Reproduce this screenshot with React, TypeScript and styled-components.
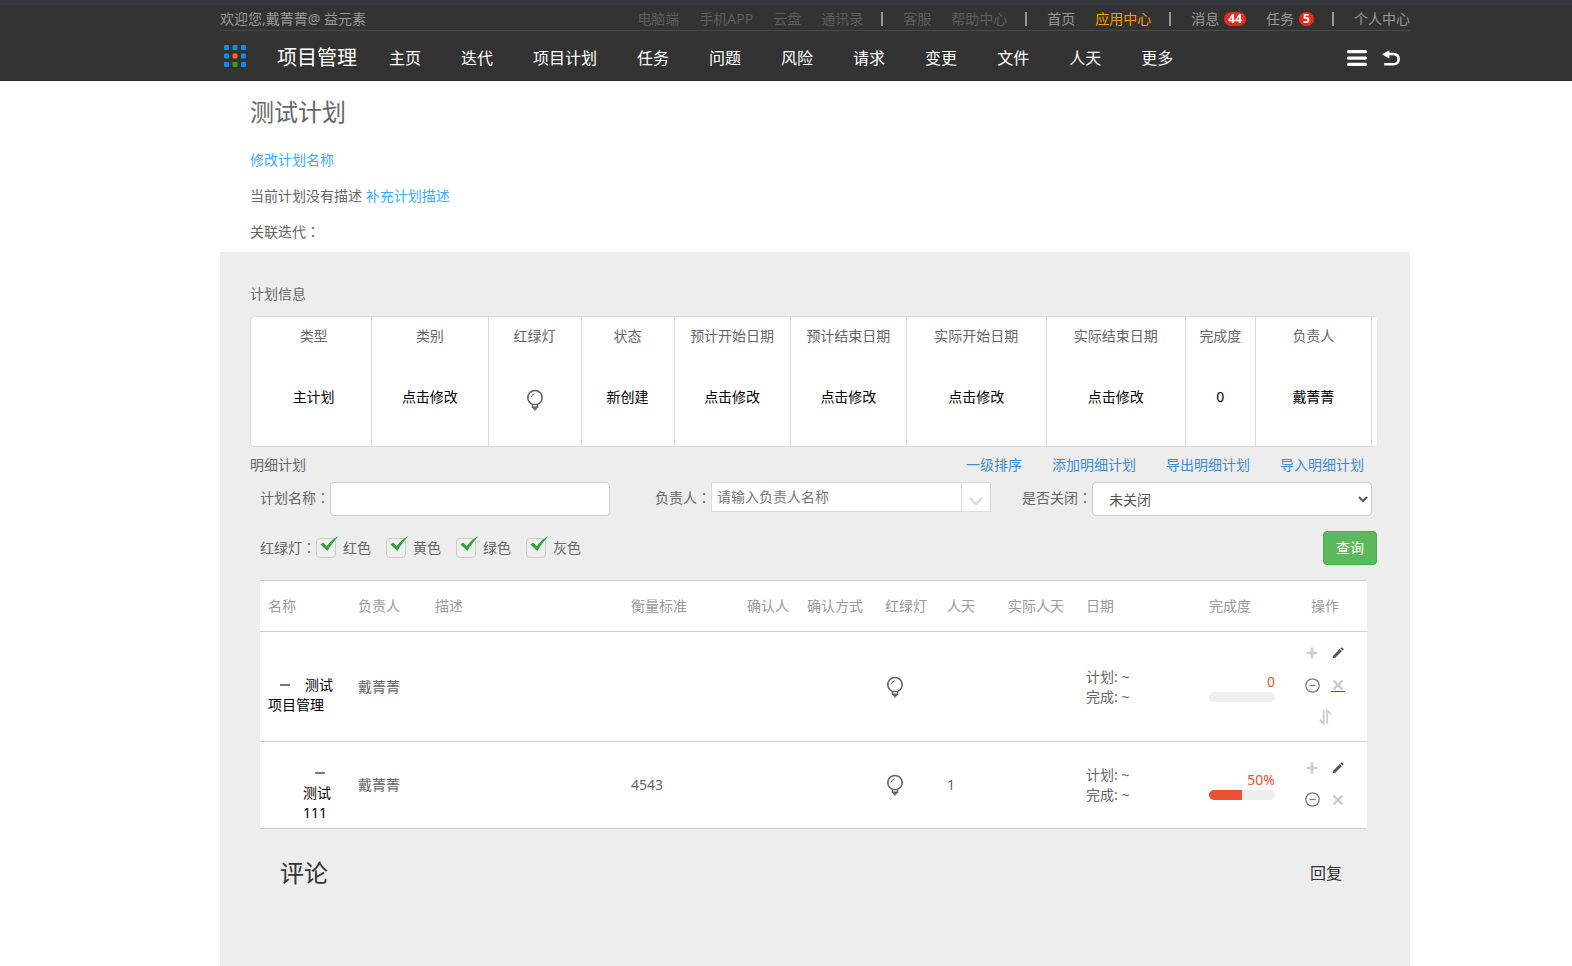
import React from 'react';
import styled, { createGlobalStyle } from 'styled-components';

const GlobalStyle = createGlobalStyle`
  *, *::before, *::after { box-sizing: border-box; }
  body {
    margin: 0;
    background: #fff;
    color: #666;
    font-family: "Noto Sans", "Noto Sans CJK SC", sans-serif;
    font-size: 14px;
    line-height: 20px;
  }
  a { text-decoration: none; }
  button, input, select { font: inherit; color: inherit; }
  svg { display: block; }
`;

/* ---------- page frame ---------- */

const Page = styled.div`
  display: flex;
  flex-direction: column;
  min-height: 100vh;
`;

const Header = styled.header`
  padding: 0 162px 0 220px;
  background: #333;
  border-top: 5px solid #36383f;
  border-bottom: 1px solid #2b2b2b;
  white-space: nowrap;
`;

const TopBar = styled.div`
  display: flex;
  align-items: center;
  justify-content: space-between;
  height: 26px;
  padding-top: 2px;
  border-bottom: 1px solid #484848;
  color: #999;
`;

const TopLinks = styled.nav`
  display: flex;
  align-items: center;
  gap: 20px;
`;

const TopLink = styled.a<{ $tone?: 'muted' | 'accent' }>`
  display: flex;
  align-items: center;
  gap: 5px;
  color: ${({ $tone }) => ($tone === 'muted' ? '#5e5e5e' : $tone === 'accent' ? '#ff9900' : '#999')};
`;

const TopDivider = styled.span`
  width: 2px;
  height: 14px;
  margin-left: -2px;
  background: #999;
`;

const Badge = styled.span`
  min-width: 15px;
  padding: 0 4px;
  border-radius: 8px;
  background: #ee2a1c;
  color: #fff;
  font-size: 12px;
  font-weight: 700;
  line-height: 14px;
  text-align: center;
`;

const MainBar = styled.div`
  display: flex;
  align-items: center;
  height: 49px;
  padding: 0 10px 0 4px;
  color: #fff;
`;

const AppTitle = styled.a`
  margin: 0 32px 0 31px;
  padding-top: 4px;
  color: #fff;
  font-size: 20px;
`;

const MainNav = styled.nav`
  display: flex;
  flex: 1;
  gap: 40px;
  padding-top: 4px;
`;

const NavLink = styled.a`
  color: #fff;
  font-size: 16px;
`;

const IconButton = styled.button`
  display: inline-flex;
  align-items: center;
  justify-content: center;
  padding: 0;
  border: 0;
  background: none;
  cursor: pointer;
`;

const BarActions = styled.div`
  display: flex;
  gap: 15px;
  padding-top: 4px;
`;

/* ---------- plan heading ---------- */

const Intro = styled.section`
  display: flex;
  flex-direction: column;
  gap: 16px;
  margin: 0 162px 0 220px;
  padding: 16px 30px 10px;
`;

const Title = styled.h1`
  margin: 0 0 7px;
  font-size: 24px;
  font-weight: 400;
  line-height: 30px;
`;

const Line = styled.p`
  margin: 0;
`;

const SkyLink = styled.a`
  color: #3daafc;
`;

const Colon = styled.span`
  font-family: "Noto Sans CJK TC", sans-serif;
  line-height: 1;
`;

/* ---------- grey panel ---------- */

const Panel = styled.main`
  flex: 1;
  margin: 0 162px 0 220px;
  padding: 32px 33px 40px 30px;
  background: #ededed;
`;

const SectionTitle = styled.h2`
  margin: 0;
  font-size: 14px;
  font-weight: 400;
`;

const InfoCard = styled.dl`
  display: grid;
  grid-template-columns: 10fr 10fr 8fr 8fr 10fr 10fr 12fr 12fr 6fr 10fr;
  margin: 12px 0 8px;
  padding: 0 4px 0 5px;
  border: 1px solid #dbdbdb;
  border-right-color: #fff;
  border-radius: 5px;
  background: #fff;
`;

const InfoItem = styled.div`
  min-width: 0;
  height: 129px;
  padding-top: 9px;
  border-right: 1px solid #dbdbdb;
  text-align: center;
  white-space: nowrap;
`;

const InfoValue = styled.dd`
  display: flex;
  justify-content: center;
  margin: 41px 0 0;
  color: #000;
  svg { margin-top: 2px; }
`;

const DetailBar = styled.div`
  display: flex;
  justify-content: space-between;
  padding-right: 13px;
`;

const DetailActions = styled.div`
  display: flex;
  gap: 30px;
`;

const ActionLink = styled.a`
  color: #428bca;
`;

const Filters = styled.form`
  padding-left: 10px;
`;

const FieldRow = styled.div`
  display: grid;
  grid-template-columns: 350px 1fr 1fr;
  margin: 7px 5px 0 0;
`;

const Field = styled.div`
  display: flex;
  justify-content: flex-end;
  line-height: 32px;
  white-space: nowrap;
`;

const TextInput = styled.input`
  width: 280px;
  height: 34px;
  padding: 6px 12px;
  border: 1px solid #ccc;
  border-radius: 4px;
  background: #fff;
`;

const Select = styled.select`
  width: 280px;
  height: 34px;
  padding: 6px 12px;
  border: 1px solid #ccc;
  border-radius: 4px;
  background: #fff;
  line-height: 20px;
  color: #555;
`;

const Combo = styled.div`
  display: flex;
  width: 280px;
  height: 30px;
  border: 1px solid #dbdbdb;
  background: #fff;
`;

const ComboInput = styled.input`
  flex: 1;
  min-width: 0;
  padding: 0 5px;
  border: 0;
  background: none;
  &::placeholder { color: #757575; }
`;

const ComboButton = styled(IconButton)`
  width: 29px;
  padding-top: 8px;
  border-left: 1px solid #dbdbdb;
`;

const LightRow = styled.div`
  display: flex;
  align-items: center;
  justify-content: space-between;
  margin-top: 15px;
`;

const LightGroup = styled.fieldset`
  display: flex;
  align-items: center;
  gap: 15px;
  margin: 0;
  padding: 0;
  border: 0;
`;

const LightCaption = styled.span`
  margin-right: -15px;
`;

const CheckLabel = styled.label`
  display: flex;
  align-items: center;
  gap: 7px;
`;

const CheckWrap = styled.span`
  position: relative;
  display: block;
  width: 20px;
  height: 20px;
  svg {
    position: absolute;
    left: 4px;
    top: -2px;
    display: none;
    pointer-events: none;
  }
  input:checked + svg { display: block; }
`;

const Checkbox = styled.input`
  display: block;
  appearance: none;
  width: 20px;
  height: 20px;
  margin: 0;
  border: 1px solid #ccc;
  border-radius: 4px;
  background: #efefef;
`;

const QueryButton = styled.button`
  height: 34px;
  padding: 0 12px;
  border: 1px solid #4cae4c;
  border-radius: 4px;
  background: #5cb85c;
  color: #fff;
  cursor: pointer;
`;

/* ---------- plan table ---------- */

const PlanTable = styled.table`
  width: calc(100% - 20px);
  margin: 15px 0 0 10px;
  border-collapse: collapse;
  table-layout: fixed;
  background: #fff;
`;

const Col = styled.col<{ $w?: number }>`
  width: ${({ $w }) => ($w ? `${$w}px` : 'auto')};
`;

const Row = styled.tr`
  border-top: 1px solid #ccc;
  border-bottom: 1px solid #ccc;
`;

const Th = styled.th<{ $center?: boolean }>`
  height: 51px;
  padding: 0 8px;
  color: #999;
  font-weight: 400;
  text-align: ${({ $center }) => ($center ? 'center' : 'left')};
  white-space: nowrap;
`;

const Td = styled.td`
  height: 87px;
  padding: 0 8px;
  vertical-align: middle;
`;

const NameTd = styled(Td)`
  padding-top: 16px;
  color: #000;
`;

const NameBox = styled.div<{ $level: number }>`
  padding-left: ${({ $level }) => $level * 35}px;
`;

const Toggle = styled(IconButton)`
  width: 14px;
  height: 14px;
  margin: 0 13px 0 10px;
  vertical-align: middle;
`;

const ProgressText = styled.div`
  color: #eb4f34;
  text-align: right;
`;

const Track = styled.div`
  height: 10px;
  overflow: hidden;
  border-radius: 5px;
  background: #eee;
`;

const Fill = styled.div`
  height: 100%;
  background: #eb4f34;
`;

const OpsTd = styled(Td)`
  padding: 5px 8px 8px;
`;

const Ops = styled.div`
  display: grid;
  grid-template-columns: 26px 26px;
  grid-auto-rows: 32px;
  justify-content: center;
  & > :nth-child(5) { grid-column: 1 / -1; }
`;

const OpInner = styled.span<{ $underlined?: boolean }>`
  display: flex;
  align-items: center;
  justify-content: center;
  width: 14px;
  height: 14px;
  border-bottom: ${({ $underlined }) => ($underlined ? '1px solid #2a6496' : '0')};
`;

/* ---------- comments ---------- */

const Comments = styled.section`
  display: flex;
  align-items: center;
  justify-content: space-between;
  padding: 24px 35px 0 30px;
  color: #333;
`;

const CommentTitle = styled.h2`
  margin: 0;
  font-size: 24px;
  font-weight: 400;
  line-height: 40px;
`;

const ReplyLink = styled.a`
  color: #333;
  font-size: 16px;
`;

/* ---------- icons ---------- */

const dotColors = ['#0b8cff', '#0b8cff', '#0b8cff', '#0b8cff', '#ff6600', '#0b8cff', '#0b8cff', '#2ca01c', '#0b8cff'];

const LogoIcon = () => (
  <svg width="22" height="22" viewBox="0 0 22 22" aria-hidden="true">
    {dotColors.map((c, i) => (
      <rect key={i} x={(i % 3) * 8.5} y={Math.floor(i / 3) * 8.5} width="5" height="5" rx="1.2" fill={c} />
    ))}
  </svg>
);

const MenuIcon = () => (
  <svg width="20" height="16" viewBox="0 0 20 16" fill="#fff" aria-hidden="true">
    <rect width="20" height="3.3" rx="1.5" />
    <rect y="6.4" width="20" height="3.3" rx="1.5" />
    <rect y="12.7" width="20" height="3.3" rx="1.5" />
  </svg>
);

const BackIcon = () => (
  <svg width="18" height="16" viewBox="0 0 18 16" aria-hidden="true">
    <path d="M7.4 0.2v8.6L0 4.2z" fill="#fff" />
    <path d="M5 4h6.2q5.4 0 5.4 5.1t-5.4 5.2H2.2" fill="none" stroke="#fff" strokeWidth="2.6" />
  </svg>
);

const BulbIcon = () => (
  <svg width="20" height="22" viewBox="0 0 20 22" fill="none" stroke="#666" aria-hidden="true">
    <path d="M7.4 15.4A7.2 7.2 0 1 1 12.6 15.4z" strokeWidth="1.5" />
    <path d="M6.4 8.2a3.8 3.8 0 0 1 3.1-3.4" strokeWidth="1" />
    <path d="M7.4 15.6v2.6h5.2v-2.6" strokeWidth="1.4" />
    <path d="M8 19.6h4M9 21h2" strokeWidth="1.2" />
  </svg>
);

const ChevronIcon = () => (
  <svg width="14" height="9" viewBox="0 0 14 9" fill="none" aria-hidden="true">
    <path d="M0.8 0.9 7 7.2 13.2 0.9" stroke="#dbdbdb" strokeWidth="2.4" />
  </svg>
);

const CheckIcon = () => (
  <svg width="19" height="16" viewBox="0 0 19 16" aria-hidden="true">
    <path d="M0.4 8.6 3.2 6.6 6.8 10.2C9.6 6 13.6 2.2 18.6 0 14.4 4.6 10.4 9.6 7.4 15z" fill="#35a03c" />
  </svg>
);

const DashIcon = () => (
  <svg width="14" height="14" viewBox="0 0 14 14" aria-hidden="true">
    <rect x="2" y="5" width="10" height="2" fill="#777" />
  </svg>
);

const PlusIcon = () => (
  <svg width="12" height="12" viewBox="0 0 12 12" aria-hidden="true">
    <path d="M6 0.6v10.8M0.6 6h10.8" stroke="#ccc" strokeWidth="2.6" />
  </svg>
);

const PencilIcon = () => (
  <svg width="12" height="12" viewBox="0 0 12 12" fill="#555" aria-hidden="true">
    <path d="M0.4 11.6 1.4 8.4 7.8 2 9.9 4.1 3.6 10.5z" />
    <path d="M8.4 1.4 9.2 0.6Q9.8 0.2 10.4 0.7L11.3 1.6Q11.8 2.2 11.3 2.8L10.5 3.5z" />
  </svg>
);

const MinusCircleIcon = () => (
  <svg width="15" height="15" viewBox="0 0 15 15" fill="none" stroke="#777" aria-hidden="true">
    <circle cx="7.5" cy="7.5" r="6.7" strokeWidth="1.2" />
    <path d="M4.4 7.5h6.2" strokeWidth="1.3" />
  </svg>
);

const CrossIcon = () => (
  <svg width="12" height="12" viewBox="0 0 12 12" aria-hidden="true">
    <path d="M1.6 1.6l8.8 8.8M10.4 1.6l-8.8 8.8" stroke="#ccc" strokeWidth="2.5" />
  </svg>
);

const SortIcon = () => (
  <svg width="13" height="16" viewBox="0 0 13 16" fill="none" stroke="#ccc" aria-hidden="true">
    <path d="M4.6 1v13.4L0.8 10.8" strokeWidth="1.8" />
    <path d="M8.2 15V1.6l3.8 3.6" strokeWidth="1.8" />
  </svg>
);

/* ---------- data ---------- */

const navItems = ['主页', '迭代', '项目计划', '任务', '问题', '风险', '请求', '变更', '文件', '人天', '更多'];

const infoItems: [string, React.ReactNode][] = [
  ['类型', '主计划'],
  ['类别', '点击修改'],
  ['红绿灯', <BulbIcon key="bulb" />],
  ['状态', '新创建'],
  ['预计开始日期', '点击修改'],
  ['预计结束日期', '点击修改'],
  ['实际开始日期', '点击修改'],
  ['实际结束日期', '点击修改'],
  ['完成度', '0'],
  ['负责人', '戴菁菁'],
];

const columns: { title: string; width?: number }[] = [
  { title: '名称', width: 90 },
  { title: '负责人', width: 77 },
  { title: '描述' },
  { title: '衡量标准', width: 116 },
  { title: '确认人', width: 60 },
  { title: '确认方式', width: 78 },
  { title: '红绿灯', width: 62 },
  { title: '人天', width: 61 },
  { title: '实际人天', width: 78 },
  { title: '日期', width: 123 },
  { title: '完成度', width: 82 },
  { title: '操作', width: 84 },
];

const plans = [
  { name: '测试项目管理', level: 0, owner: '戴菁菁', measure: '', days: '', progress: 0, label: '0', sortable: true },
  { name: '测试111', level: 1, owner: '戴菁菁', measure: '4543', days: '1', progress: 50, label: '50%', sortable: false },
];

const lights = ['红色', '黄色', '绿色', '灰色'];

export default function App() {
  return (
    <Page>
      <GlobalStyle />
      <Header>
        <TopBar>
          <span>欢迎您,戴菁菁@ 益元素</span>
          <TopLinks>
            <TopLink href="#" $tone="muted">电脑端</TopLink>
            <TopLink href="#" $tone="muted">手机APP</TopLink>
            <TopLink href="#" $tone="muted">云盘</TopLink>
            <TopLink href="#" $tone="muted">通讯录</TopLink>
            <TopDivider />
            <TopLink href="#" $tone="muted">客服</TopLink>
            <TopLink href="#" $tone="muted">帮助中心</TopLink>
            <TopDivider />
            <TopLink href="#">首页</TopLink>
            <TopLink href="#" $tone="accent">应用中心</TopLink>
            <TopDivider />
            <TopLink href="#">消息<Badge>44</Badge></TopLink>
            <TopLink href="#">任务<Badge>5</Badge></TopLink>
            <TopDivider />
            <TopLink href="#">个人中心</TopLink>
          </TopLinks>
        </TopBar>
        <MainBar>
          <LogoIcon />
          <AppTitle href="#">项目管理</AppTitle>
          <MainNav>
            {navItems.map((n) => (
              <NavLink href="#" key={n}>{n}</NavLink>
            ))}
          </MainNav>
          <BarActions>
            <IconButton type="button" aria-label="菜单"><MenuIcon /></IconButton>
            <IconButton type="button" aria-label="返回"><BackIcon /></IconButton>
          </BarActions>
        </MainBar>
      </Header>

      <Intro>
        <Title>测试计划</Title>
        <Line><SkyLink href="#">修改计划名称</SkyLink></Line>
        <Line>当前计划没有描述 <SkyLink href="#">补充计划描述</SkyLink></Line>
        <Line>关联迭代<Colon>：</Colon></Line>
      </Intro>

      <Panel>
        <SectionTitle>计划信息</SectionTitle>
        <InfoCard>
          {infoItems.map(([title, value]) => (
            <InfoItem key={title}>
              <dt>{title}</dt>
              <InfoValue>{value}</InfoValue>
            </InfoItem>
          ))}
        </InfoCard>

        <DetailBar>
          <SectionTitle>明细计划</SectionTitle>
          <DetailActions>
            <ActionLink href="#">一级排序</ActionLink>
            <ActionLink href="#">添加明细计划</ActionLink>
            <ActionLink href="#">导出明细计划</ActionLink>
            <ActionLink href="#">导入明细计划</ActionLink>
          </DetailActions>
        </DetailBar>

        <Filters onSubmit={(e) => e.preventDefault()}>
          <FieldRow>
            <Field>
              <label htmlFor="plan-name">计划名称<Colon>：</Colon></label>
              <TextInput id="plan-name" type="text" />
            </Field>
            <Field>
              <label htmlFor="plan-owner">负责人<Colon>：</Colon></label>
              <Combo>
                <ComboInput id="plan-owner" type="text" placeholder="请输入负责人名称" />
                <ComboButton type="button" aria-label="展开"><ChevronIcon /></ComboButton>
              </Combo>
            </Field>
            <Field>
              <label htmlFor="plan-closed">是否关闭<Colon>：</Colon></label>
              <Select id="plan-closed" defaultValue="open">
                <option value="open">未关闭</option>
                <option value="closed">已关闭</option>
              </Select>
            </Field>
          </FieldRow>
          <LightRow>
            <LightGroup>
              <LightCaption>红绿灯<Colon>：</Colon></LightCaption>
              {lights.map((l) => (
                <CheckLabel key={l}>
                  <CheckWrap>
                    <Checkbox type="checkbox" defaultChecked />
                    <CheckIcon />
                  </CheckWrap>
                  {l}
                </CheckLabel>
              ))}
            </LightGroup>
            <QueryButton type="submit">查询</QueryButton>
          </LightRow>
        </Filters>

        <PlanTable>
          <colgroup>
            {columns.map((c) => (
              <Col key={c.title} $w={c.width} />
            ))}
          </colgroup>
          <thead>
            <Row>
              {columns.map((c) => (
                <Th key={c.title} $center={c.title === '操作'}>{c.title}</Th>
              ))}
            </Row>
          </thead>
          <tbody>
            {plans.map((p) => (
              <Row key={p.name}>
                <NameTd>
                  <NameBox $level={p.level}>
                    <Toggle type="button" aria-label="收起"><DashIcon /></Toggle>
                    {p.name}
                  </NameBox>
                </NameTd>
                <Td>{p.owner}</Td>
                <Td />
                <Td>{p.measure}</Td>
                <Td />
                <Td />
                <Td><BulbIcon /></Td>
                <Td>{p.days}</Td>
                <Td />
                <Td>
                  <div>计划: ~</div>
                  <div>完成: ~</div>
                </Td>
                <Td>
                  <ProgressText>{p.label}</ProgressText>
                  <Track><Fill style={{ width: `${p.progress}%` }} /></Track>
                </Td>
                <OpsTd>
                  <Ops>
                    <IconButton type="button" aria-label="添加"><PlusIcon /></IconButton>
                    <IconButton type="button" aria-label="编辑"><PencilIcon /></IconButton>
                    <IconButton type="button" aria-label="关闭"><MinusCircleIcon /></IconButton>
                    <IconButton type="button" aria-label="删除">
                      <OpInner $underlined={p.sortable}><CrossIcon /></OpInner>
                    </IconButton>
                    {p.sortable && (
                      <IconButton type="button" aria-label="排序"><SortIcon /></IconButton>
                    )}
                  </Ops>
                </OpsTd>
              </Row>
            ))}
          </tbody>
        </PlanTable>

        <Comments>
          <CommentTitle>评论</CommentTitle>
          <ReplyLink href="#">回复</ReplyLink>
        </Comments>
      </Panel>
    </Page>
  );
}
